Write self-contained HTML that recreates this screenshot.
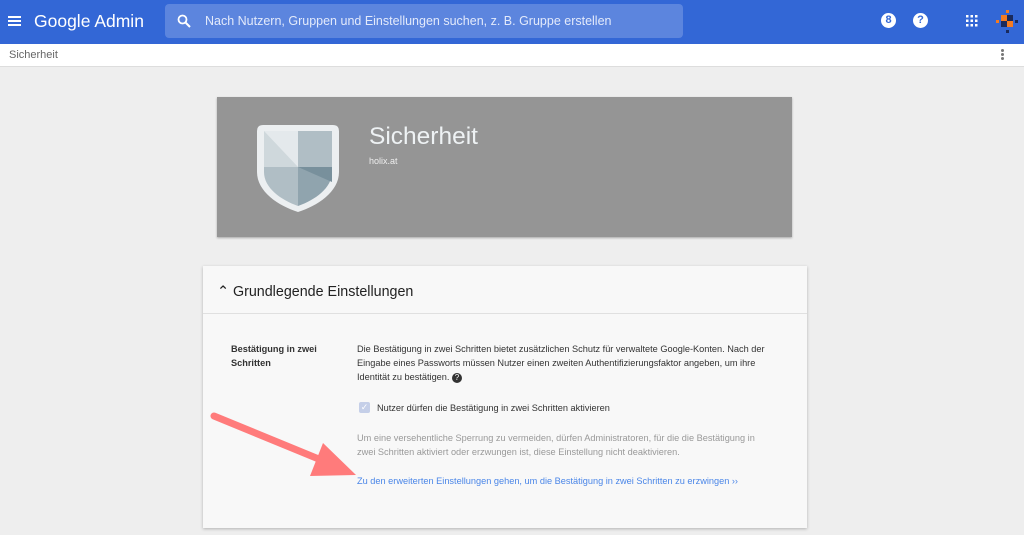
<!DOCTYPE html>
<html><head><meta charset="utf-8"><style>
*{margin:0;padding:0;box-sizing:border-box}
body{width:1024px;height:535px;overflow:hidden;background:#eeeeee;font-family:"Liberation Sans",Roboto,sans-serif;position:relative}
.top{position:absolute;left:0;top:0;width:1024px;height:44px;background:#3367d6}
.sub{position:absolute;left:0;top:44px;width:1024px;height:23px;background:#fff;border-bottom:1px solid #ddd;font-size:11px;color:#666;padding:5px 9px}
.search{position:absolute;left:165px;top:4px;width:518px;height:34px;background:#5c85de;border-radius:4px;color:#e3eafb;font-size:12.5px;line-height:34px;padding-left:40px}
.banner{position:absolute;left:217px;top:97px;width:575px;height:140px;background:#959595;box-shadow:0 1px 2px rgba(0,0,0,.3)}
.card{position:absolute;left:203px;top:266px;width:604px;height:262px;background:#f8f8f8;box-shadow:0 1px 3px rgba(0,0,0,.25)}
.t{position:absolute;font-size:9.2px;color:#333;line-height:14px}
</style></head><body>
<div class="top">
<div style="position:absolute;left:8px;top:16px;width:13px;height:2px;background:#fff;box-shadow:0 4px 0 #fff,0 8px 0 #fff"></div>
<div style="position:absolute;left:34px;top:11px;color:#fff;font-size:17.5px">Google Admin</div>
<div class="search">Nach Nutzern, Gruppen und Einstellungen suchen, z. B. Gruppe erstellen
<svg style="position:absolute;left:12px;top:10px" width="14" height="14" viewBox="0 0 14 14"><circle cx="5.5" cy="5.5" r="4" stroke="#fff" stroke-width="1.8" fill="none"/><path d="M8.5 8.5L13 13" stroke="#fff" stroke-width="2"/></svg></div>
<div style="position:absolute;left:881px;top:13px;width:15px;height:15px;border-radius:50%;background:#fff;color:#3367d6;font-size:11px;font-weight:bold;text-align:center;line-height:15px">8</div>
<div style="position:absolute;left:913px;top:13px;width:15px;height:15px;border-radius:50%;background:#fff;color:#3367d6;font-size:11px;font-weight:bold;text-align:center;line-height:15px">?</div>
<svg style="position:absolute;left:966px;top:15px" width="12" height="12"><g fill="#fff"><rect x="0" y="0" width="2.5" height="2.5"/><rect x="4.5" y="0" width="2.5" height="2.5"/><rect x="9" y="0" width="2.5" height="2.5"/><rect x="0" y="4.5" width="2.5" height="2.5"/><rect x="4.5" y="4.5" width="2.5" height="2.5"/><rect x="9" y="4.5" width="2.5" height="2.5"/><rect x="0" y="9" width="2.5" height="2.5"/><rect x="4.5" y="9" width="2.5" height="2.5"/><rect x="9" y="9" width="2.5" height="2.5"/></g></svg>
<svg style="position:absolute;left:994px;top:9px" width="26" height="26"><rect x="7" y="6" width="6" height="6" fill="#f47b20"/><rect x="13" y="6" width="6" height="6" fill="#1a2a5c"/><rect x="7" y="12" width="6" height="6" fill="#1a2a5c"/><rect x="13" y="12" width="6" height="6" fill="#f47b20"/><rect x="2" y="11" width="3" height="3" fill="#f47b20"/><rect x="21" y="11" width="3" height="3" fill="#1a2a5c"/><rect x="12" y="1" width="3" height="3" fill="#f47b20"/><rect x="12" y="21" width="3" height="3" fill="#1a2a5c"/></svg>
</div>
<div class="sub">Sicherheit
<div style="position:absolute;left:1001px;top:5px;width:3px;height:3px;background:#777;border-radius:50%;box-shadow:0 4px 0 #777,0 8px 0 #777"></div></div>
<div class="banner">
<svg style="position:absolute;left:38px;top:25px" width="86" height="92" viewBox="0 0 86 92"><path d="M8 3H78Q84 3 84 9V50C84 70 62 84 43 90C24 84 2 70 2 50V9Q2 3 8 3Z" fill="#eceff1"/><path d="M9 9H43V45H9Z" fill="#cfd8dc"/><path d="M9 9H43V45Z" fill="#e4e9ec"/><path d="M43 9H77V45H43Z" fill="#b0bec5"/><path d="M9 45H43V84C26 78 9 66 9 50Z" fill="#b0bec5"/><path d="M43 45H77V50C77 66 60 78 43 84Z" fill="#90a4ae"/><path d="M43 45H77V60Z" fill="#78909c"/></svg>
<div style="position:absolute;left:152px;top:26px;color:#eef2f4;font-size:24.5px">Sicherheit</div>
<div style="position:absolute;left:152px;top:59px;color:#eee;font-size:9px">holix.at</div>
</div>
<div class="card">
<div style="position:absolute;left:14px;top:18px;font-size:14.3px;color:#222">⌃&nbsp;Grundlegende Einstellungen</div>
<div style="position:absolute;left:0;top:47px;width:604px;height:1px;background:#e0e0e0"></div>
<div class="t" style="left:28px;top:76px;font-weight:bold;width:110px">Bestätigung in zwei Schritten</div>
<div class="t" style="left:154px;top:76px;width:418px">Die Bestätigung in zwei Schritten bietet zusätzlichen Schutz für verwaltete Google-Konten. Nach der Eingabe eines Passworts müssen Nutzer einen zweiten Authentifizierungsfaktor angeben, um ihre Identität zu bestätigen. <span style="display:inline-block;width:10px;height:10px;border-radius:50%;background:#333;color:#fff;font-size:8px;text-align:center;line-height:10px">?</span></div>
<div style="position:absolute;left:156px;top:136px;width:11px;height:11px;background:#c5cfe8;border-radius:2px;color:#fff;font-size:9px;line-height:11px;text-align:center">✓</div>
<div class="t" style="left:174px;top:135px">Nutzer dürfen die Bestätigung in zwei Schritten aktivieren</div>
<div class="t" style="left:154px;top:165px;width:405px;color:#999">Um eine versehentliche Sperrung zu vermeiden, dürfen Administratoren, für die die Bestätigung in zwei Schritten aktiviert oder erzwungen ist, diese Einstellung nicht deaktivieren.</div>
<div class="t" style="left:154px;top:208px;color:#4a86e8">Zu den erweiterten Einstellungen gehen, um die Bestätigung in zwei Schritten zu erzwingen ››</div>
</div>
<svg style="position:absolute;left:0;top:0" width="1024" height="535"><path d="M214 416L326 462" stroke="#ff7b7b" stroke-width="7" stroke-linecap="round"/><path d="M310 476L323 443L356 475Z" fill="#ff7b7b"/></svg>
</body></html>
